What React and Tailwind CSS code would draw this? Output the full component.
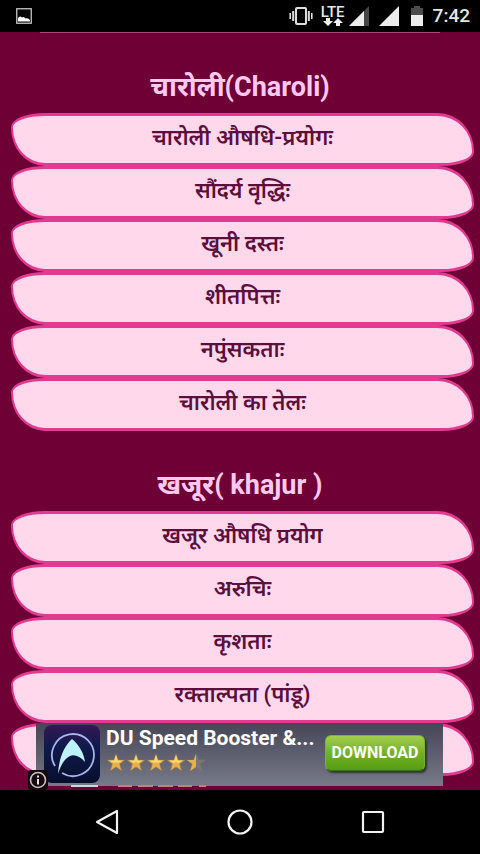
const sections = [
  {
    title: 'चारोली(Charoli)',
    items: ['चारोली औषधि-प्रयोगः', 'सौंदर्य वृद्धिः', 'खूनी दस्तः', 'शीतपित्तः', 'नपुंसकताः', 'चारोली का तेलः'],
  },
  {
    title: 'खजूर( khajur )',
    items: ['खजूर औषधि प्रयोग', 'अरुचिः', 'कृशताः', 'रक्ताल्पता (पांडू)', ''],
  },
]

export default function App() {
  return (
    <div className="flex h-dvh flex-col overflow-hidden bg-[#6e0036] font-['Roboto','Noto_Sans','Noto_Sans_Devanagari',sans-serif]">
      <StatusBar />
      <main className="relative min-h-0 flex-1 overflow-hidden">
        <div className="mx-10 h-px bg-[#a8457c]" />
        {sections.map((section) => (
          <Section key={section.title} title={section.title} items={section.items} />
        ))}
        <AdBanner />
      </main>
      <NavBar />
    </div>
  )
}

function StatusBar() {
  return (
    <header className="flex h-8 shrink-0 items-center bg-black pl-4 pr-[10px] text-[#e6e6e6]">
      <svg className="h-4 w-4" viewBox="0 0 16 16" aria-hidden="true">
        <rect x="0.75" y="0.75" width="14.5" height="14.5" fill="#050505" stroke="#c4c4c4" strokeWidth="1.3" />
        <path d="M2 13.5V10Q4 7 6 9.6Q8 8 9.5 10.5Q12 9.5 14 12V13.5Z" fill="#fff" />
      </svg>

      <div className="ml-auto flex items-center">
        <svg className="mr-2 h-5 w-6" viewBox="0 0 24 20" fill="none" stroke="#dedede" aria-hidden="true">
          <rect x="7" y="2" width="10" height="16" rx="1" strokeWidth="2" />
          <path d="M4.2 5V15M19.8 5V15" strokeWidth="2" />
          <path d="M1.2 7V13M22.8 7V13" strokeWidth="1.6" />
        </svg>

        <div className="mr-1 flex w-6 flex-col items-center">
          <span className="text-[15px] font-medium leading-3">LTE</span>
          <svg className="h-2 w-5" viewBox="0 0 20 8" fill="#f0f0f0" aria-hidden="true">
            <path d="M3 0H7V3H10L5 8L0 3H3Z" />
            <path d="M13 8H17V5H20L15 0L10 5H13Z" />
          </svg>
        </div>

        <svg className="mr-[10px] h-5 w-5" viewBox="0 0 20 20" aria-hidden="true">
          <path d="M20 0V20H0Z" fill="#454545" />
          <path d="M15 5V20H0Z" fill="#ededed" />
        </svg>
        <svg className="mr-3 h-5 w-5" viewBox="0 0 20 20" aria-hidden="true">
          <path d="M20 0V20H0Z" fill="#ededed" />
        </svg>
        <svg className="mr-[10px] h-5 w-3" viewBox="0 0 12 20" aria-hidden="true">
          <path d="M3 0H9V2H12V10H0V2H3Z" fill="#4b4b4b" />
          <path d="M0 9H12V20H0Z" fill="#ededed" />
        </svg>
        <span className="text-[19px] font-medium leading-6">7:42</span>
      </div>
    </header>
  )
}

function Section({ title, items }) {
  return (
    <section>
      <h2 className="flex h-20 items-end justify-center pb-2 text-[27px] font-bold leading-9 text-[#ffc8ee]">{title}</h2>
      <ul className="pl-[11px] pr-[6px]">
        {items.map((item, index) => (
          <li key={index}>
            <button className="flex h-[53px] w-full justify-center rounded-[34px_36px_32px_34px/14px_38px_14px_38px] border-x-2 border-y-[3px] border-[#e23a90] bg-[#ffd8ec] pt-[6px] text-[22px] font-semibold leading-8 text-[#5c0f3c]">
              {item}
            </button>
          </li>
        ))}
      </ul>
    </section>
  )
}

function AdBanner() {
  return (
    <aside className="absolute inset-x-0 bottom-1 mx-9">
      <div className="flex h-[63px] w-[407px] max-w-full bg-gradient-to-b from-[#464656] to-[#777a88]">
        <svg className="ml-2 h-[60px] w-14 shrink-0" viewBox="0 0 56 60" aria-hidden="true">
          <defs>
            <linearGradient id="tile" x1="0" y1="0" x2="0" y2="1">
              <stop offset="0" stopColor="#351757" />
              <stop offset="0.35" stopColor="#111b4c" />
              <stop offset="1" stopColor="#070e2c" />
            </linearGradient>
          </defs>
          <rect y="2" width="56" height="58" rx="8" fill="url(#tile)" />
          <path d="M18 50A21 21 0 1 0 11 43" fill="none" stroke="#a6b5ed" strokeWidth="1.8" />
          <path d="M14 51C15 35 20 23 28 16C35 22 40 30 41 39C36 33 30 31 26 33C20 36 17 42 14 51Z" fill="#bdf2fa" />
        </svg>

        <div className="ml-[6px] min-w-0 flex-1">
          <p className="whitespace-nowrap text-[21px] font-bold leading-[30px] text-white">DU Speed Booster &amp;...</p>
          <div className="flex">
            {[1, 1, 1, 1, 0.5].map((fill, index) => (
              <Star key={index} half={fill < 1} />
            ))}
          </div>
        </div>

        <button className="mr-[18px] mt-3 h-9 w-[100px] shrink-0 rounded-md border border-[#77b52f] border-b-[#3b7411] bg-gradient-to-b from-[#a2ce4e] via-[#72b126] to-[#579d12] text-base font-bold text-white shadow-[2px_2px_2px_#2c3a2c]">
          DOWNLOAD
        </button>
      </div>
      <svg className="absolute left-8 top-[62px] h-[2px] w-36" viewBox="0 0 144 2" aria-hidden="true">
        <path d="M3 1H30" stroke="#d8d3da" strokeWidth="2" />
        <path d="M50 1H64M70 1H85M90 1H105M110 1H124M131 1H138" stroke="#bd827e" strokeWidth="2" />
      </svg>
      <InfoIcon />
    </aside>
  )
}

function Star({ half }) {
  const shape = 'M10 1L12.3 7H19L13.7 11L15.8 18L10 14L4.2 18L6.3 11L1 7H7.7Z'

  return (
    <svg className="h-5 w-5" viewBox="0 0 20 20" aria-hidden="true">
      <path d={shape} fill={half ? '#777782' : '#e9b049'} stroke="#8e7351" strokeWidth="0.6" />
      {half && <path d="M10 1L7.7 7H1L6.3 11L4.2 18L10 14Z" fill="#e9b049" />}
      {!half && <path d="M10 2L11.7 7.5H17L12 10L10 9L8 10L3 7.5H8.3Z" fill="#f8d778" />}
    </svg>
  )
}

function InfoIcon() {
  return (
    <svg className="absolute -bottom-1 -left-2 h-5 w-5" viewBox="0 0 20 20" aria-hidden="true">
      <rect width="20" height="20" rx="3" fill="#17070f" />
      <circle cx="10" cy="10" r="7.5" fill="#17070f" stroke="#c9c4c6" strokeWidth="1.6" />
      <path d="M10 5.5V7.5M10 9V14.5" stroke="#e4e0e2" strokeWidth="2" />
    </svg>
  )
}

function NavBar() {
  return (
    <nav className="flex h-16 shrink-0 items-center justify-center gap-[101px] bg-black text-[#f2f2f2]" aria-label="System">
      <button aria-label="Back">
        <svg className="h-8 w-8" viewBox="0 0 32 32" fill="none" stroke="currentColor" strokeWidth="2.2">
          <path d="M26 5V27L6 16Z" strokeLinejoin="round" />
        </svg>
      </button>
      <button aria-label="Home">
        <svg className="h-8 w-8" viewBox="0 0 32 32" fill="none" stroke="currentColor" strokeWidth="2.2">
          <circle cx="16" cy="16" r="11.5" />
        </svg>
      </button>
      <button aria-label="Recent apps">
        <svg className="h-8 w-8" viewBox="0 0 32 32" fill="none" stroke="currentColor" strokeWidth="2.2">
          <rect x="6" y="6" width="20" height="20" rx="1" />
        </svg>
      </button>
    </nav>
  )
}
